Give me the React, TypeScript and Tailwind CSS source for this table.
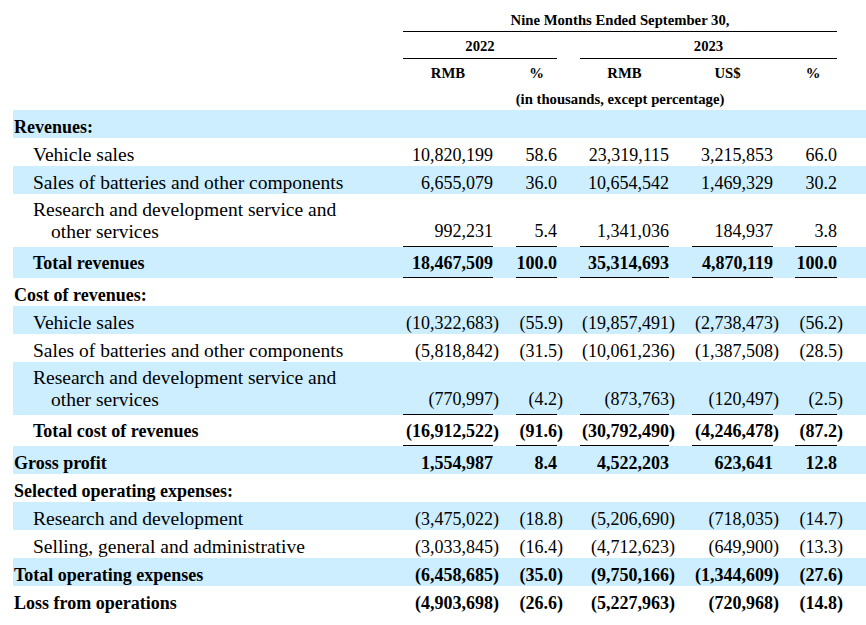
import { Fragment } from 'react'

const NUM_W = ['w-[90px]', 'w-[41px]', 'w-[89px]', 'w-[81px]', 'w-[42px]']
const GAP_W = ['w-[15px]', 'w-[15px]', 'w-[15px]', 'w-[14px]', 'w-0']
const HEADS = ['RMB', '%', 'RMB', 'US$', '%']
const HEAD_PAD = ['', '', '', 'pr-[10px]', 'pr-[6px]']

type Row = {
  label: string | string[]
  indent?: number
  bold?: boolean
  blue?: boolean
  vals?: string[]
  rule?: boolean
  kind?: 'one' | 'two' | 'total'
}

const RD = ['Research and development service and', 'other services']

const ROWS: Row[] = [
  { label: 'Revenues:', bold: true, blue: true },
  { label: 'Vehicle sales', indent: 1, vals: ['10,820,199', '58.6', '23,319,115', '3,215,853', '66.0'] },
  { label: 'Sales of batteries and other components', indent: 1, blue: true, vals: ['6,655,079', '36.0', '10,654,542', '1,469,329', '30.2'] },
  { label: RD, indent: 1, kind: 'two', rule: true, vals: ['992,231', '5.4', '1,341,036', '184,937', '3.8'] },
  { label: 'Total revenues', indent: 1, bold: true, blue: true, kind: 'total', rule: true, vals: ['18,467,509', '100.0', '35,314,693', '4,870,119', '100.0'] },
  { label: 'Cost of revenues:', bold: true },
  { label: 'Vehicle sales', indent: 1, blue: true, vals: ['(10,322,683)', '(55.9)', '(19,857,491)', '(2,738,473)', '(56.2)'] },
  { label: 'Sales of batteries and other components', indent: 1, vals: ['(5,818,842)', '(31.5)', '(10,061,236)', '(1,387,508)', '(28.5)'] },
  { label: RD, indent: 1, blue: true, kind: 'two', rule: true, vals: ['(770,997)', '(4.2)', '(873,763)', '(120,497)', '(2.5)'] },
  { label: 'Total cost of revenues', indent: 1, bold: true, kind: 'total', rule: true, vals: ['(16,912,522)', '(91.6)', '(30,792,490)', '(4,246,478)', '(87.2)'] },
  { label: 'Gross profit', bold: true, blue: true, vals: ['1,554,987', '8.4', '4,522,203', '623,641', '12.8'] },
  { label: 'Selected operating expenses:', bold: true },
  { label: 'Research and development', indent: 1, blue: true, vals: ['(3,475,022)', '(18.8)', '(5,206,690)', '(718,035)', '(14.7)'] },
  { label: 'Selling, general and administrative', indent: 1, vals: ['(3,033,845)', '(16.4)', '(4,712,623)', '(649,900)', '(13.3)'] },
  { label: 'Total operating expenses', bold: true, blue: true, vals: ['(6,458,685)', '(35.0)', '(9,750,166)', '(1,344,609)', '(27.6)'] },
  { label: 'Loss from operations', bold: true, vals: ['(4,903,698)', '(26.6)', '(5,227,963)', '(720,968)', '(14.8)'] },
]

function Line({ row }: { row: Row }) {
  const kind = row.kind ?? 'one'
  const h = kind === 'two' ? 'h-[53px]' : kind === 'total' ? 'h-[31px]' : 'h-[28px]'
  const lead =
    kind === 'two' ? 'leading-[22px] pb-[4px]' : kind === 'total' ? 'leading-[28px] pt-[2px]' : 'leading-[22px] pt-[6px]'
  const lines = Array.isArray(row.label) ? row.label : [row.label]

  return (
    <div className={`flex ${h} ${row.blue ? 'bg-[#cceeff]' : ''} ${row.bold ? 'font-bold' : ''}`}>
      <div
        className={`w-[390px] flex flex-col whitespace-nowrap ${kind === 'two' ? 'justify-center' : ''} ${
          row.indent ? 'pl-[20px]' : 'pl-[1px]'
        } ${row.bold ? '' : 'text-[19.5px]'}`}
      >
        {lines.map((t, i) => (
          <div key={i} className={`${kind === 'two' ? 'leading-[22px]' : lead} ${i > 0 ? 'pl-[18px]' : ''}`}>
            {t}
          </div>
        ))}
      </div>
      {row.vals?.map((v, i) => {
        const neg = v.endsWith(')')
        return (
          <Fragment key={i}>
            <div
              className={`${NUM_W[i]} flex items-end justify-end whitespace-nowrap ${lead} ${
                row.rule ? 'border-b border-black' : ''
              }`}
            >
              {neg ? v.slice(0, -1) : v}
            </div>
            <div className={`w-[8px] flex items-end ${lead}`}>{neg ? ')' : ''}</div>
            <div className={GAP_W[i]} />
          </Fragment>
        )
      })}
    </div>
  )
}

export default function App() {
  return (
    <div className="w-[866px] h-[625px] overflow-hidden bg-white pl-[13px] text-black text-[18px] font-['Liberation_Serif','Times_New_Roman',serif]">
      {/* column headings */}
      <div className="h-[110px] font-bold text-[14.7px] leading-[18px]">
        <div className="flex h-[32px]">
          <div className="w-[390px]" />
          <div className="w-[434px] border-b border-black text-center pt-[11px]">Nine Months Ended September 30,</div>
        </div>
        <div className="flex h-[27px]">
          <div className="w-[390px]" />
          <div className="w-[154px] border-b border-black text-center pt-[5px]">2022</div>
          <div className="w-[23px]" />
          <div className="w-[257px] border-b border-black text-center pt-[5px]">2023</div>
        </div>
        <div className="flex h-[26px] pt-[5px]">
          <div className="w-[390px]" />
          {HEADS.map((t, i) => (
            <Fragment key={i}>
              <div className={`${NUM_W[i]} ${HEAD_PAD[i]} text-center`}>{t}</div>
              <div className="w-[8px]" />
              <div className={GAP_W[i]} />
            </Fragment>
          ))}
        </div>
        <div className="flex h-[25px] pt-[5px]">
          <div className="w-[390px]" />
          <div className="w-[434px] text-center">(in thousands, except percentage)</div>
        </div>
      </div>

      {ROWS.map((r, i) => (
        <Line key={i} row={r} />
      ))}
    </div>
  )
}
